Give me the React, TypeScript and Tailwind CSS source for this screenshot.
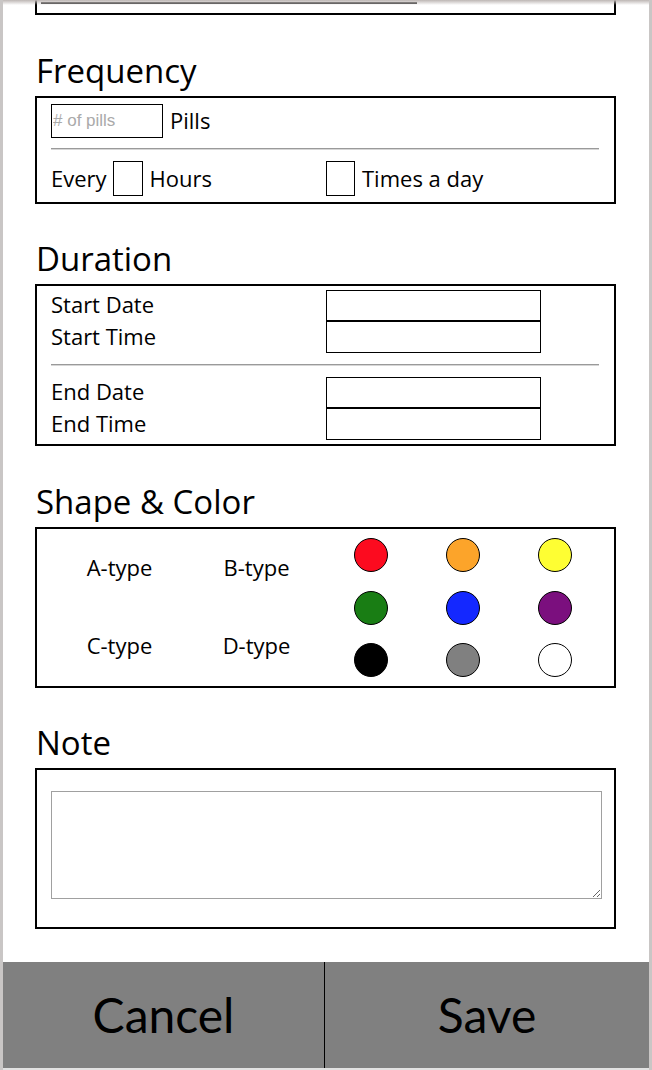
import React from "react";

const colors = [
  "bg-[#fc0b1f]",
  "bg-[#fca42a]",
  "bg-[#fefe33]",
  "bg-[#197d14]",
  "bg-[#1428ff]",
  "bg-[#7b0f7e]",
  "bg-black",
  "bg-[#808080]",
  "bg-white",
];

function Rule({ className = "" }: { className?: string }) {
  return (
    <div
      className={
        "h-[2px] w-[548px] border-t border-b border-t-[#9a9a9a] border-b-[#d6d6d6] " +
        className
      }
    />
  );
}

function Section({
  title,
  head = "h-[81px]",
  children,
}: {
  title: string;
  head?: string;
  children: React.ReactNode;
}) {
  return (
    <div>
      <div className={"flex items-end pb-[9px] pl-[1px] text-[33px] leading-[32px] " + head}>
        {title}
      </div>
      <div className="w-[581px] border-2 border-black">{children}</div>
    </div>
  );
}

function TimeInputs() {
  return (
    <div>
      <div className="h-[31px] border border-black" />
      <div className="h-[32px] border border-black" />
    </div>
  );
}

export default function App() {
  return (
    <div className="relative min-h-[1070px] w-[652px] overflow-hidden border-r-[3px] border-l-[3px] border-[#c9c6c5] bg-white font-['Open_Sans',_sans-serif] text-black">
      <div className="absolute inset-x-0 top-0 h-[5px] bg-gradient-to-b from-[#bdb6b4] to-transparent" />

      <div className="pl-[32px]">
        {/* cut-off box from the previous section */}
        <div className="-mt-[45px] h-[60px] w-[581px] border-2 border-black">
          <div className="ml-[4px] mt-[45px] w-[376px] border-b-2 border-[#444]" />
        </div>

        <Section title="Frequency">
          <div className="px-[14px] pt-[6px] pb-[6px]">
            <div className="flex h-[33px] items-center">
              <input
                placeholder="# of pills"
                className="h-[34px] w-[112px] border border-black px-[1px] font-['Liberation_Sans',_sans-serif] text-[17px] outline-none placeholder:text-[#aaaaaa]"
              />
              <span className="ml-[7px] text-[22px]">Pills</span>
            </div>
            <Rule className="my-[11px]" />
            <div className="grid h-[35px] grid-cols-[275px_1fr] text-[22px]">
              <div className="flex items-center">
                <span>Every</span>
                <div className="ml-[6px] h-[35px] w-[30px] border border-black" />
                <span className="ml-[7px]">Hours</span>
              </div>
              <div className="flex items-center">
                <div className="h-[35px] w-[29px] border border-black" />
                <span className="ml-[7px]">Times a day</span>
              </div>
            </div>
          </div>
        </Section>

        <Section title="Duration" head="h-[80px]">
          <div className="px-[14px] pt-[4px] pb-[4px] text-[22px]">
            <div className="grid grid-cols-[275px_215px]">
              <div>
                <div className="flex h-[31px] items-center pb-[2px]">Start Date</div>
                <div className="flex h-[32px] items-center pb-[2px]">Start Time</div>
              </div>
              <TimeInputs />
            </div>
            <Rule className="my-[11px]" />
            <div className="grid grid-cols-[275px_215px]">
              <div>
                <div className="flex h-[31px] items-center pb-[2px]">End Date</div>
                <div className="flex h-[32px] items-center pb-[2px]">End Time</div>
              </div>
              <TimeInputs />
            </div>
          </div>
        </Section>

        <Section title="Shape & Color">
          <div className="flex pl-[14px] text-[22px]">
            <div className="grid grid-cols-[137px_137px] grid-rows-[76px_81px]">
              <div className="flex items-center justify-center">A-type</div>
              <div className="flex items-center justify-center">B-type</div>
              <div className="flex items-center justify-center">C-type</div>
              <div className="flex items-center justify-center">D-type</div>
            </div>
            <div className="grid grid-cols-[92px_92px_92px] grid-rows-[52px_53px_52px]">
              {colors.map((c) => (
                <div key={c} className="flex items-center justify-center">
                  <div
                    className={"h-[34px] w-[34px] rounded-full border-[1.5px] border-black " + c}
                  />
                </div>
              ))}
            </div>
          </div>
        </Section>

        <Section title="Note" head="h-[80px]">
          <div className="pt-[21px] pb-[28px] pl-[14px]">
            <textarea className="block h-[108px] w-[551px] border border-[#a0a0a0] outline-none" />
          </div>
        </Section>
      </div>

      <div className="mt-[33px] flex h-[106px] bg-[#808080] font-['Lato',_sans-serif] text-[48px]">
        <div className="flex w-[322px] items-center justify-center border-r border-black">
          Cancel
        </div>
        <div className="flex flex-1 items-center justify-center">Save</div>
      </div>
      <div className="h-[2px] bg-[#e2e2e2]" />
    </div>
  );
}
